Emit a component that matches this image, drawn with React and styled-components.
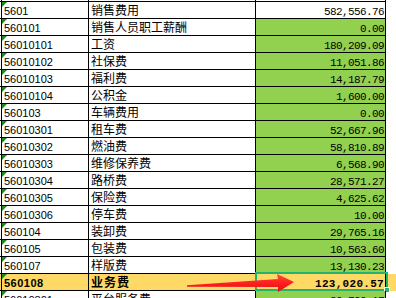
import styled, { createGlobalStyle } from 'styled-components'

const GlobalStyle = createGlobalStyle`
    html, body {
        margin: 0;
        padding: 0;
        background: #ffffff;
        overflow: hidden;
    }
`;

// 열 너비 (border 포함)
const COLS = '2px 87px 167px 130px 1fr';

const rows = [
    { code: '5601', name: '销售费用', amount: '582,556.76', plain: true },
    { code: '560101', name: '销售人员职工薪酬', amount: '0.00' },
    { code: '56010101', name: '工资', amount: '180,209.09' },
    { code: '56010102', name: '社保费', amount: '11,051.86' },
    { code: '56010103', name: '福利费', amount: '14,187.79' },
    { code: '56010104', name: '公积金', amount: '1,600.00' },
    { code: '560103', name: '车辆费用', amount: '0.00' },
    { code: '56010301', name: '租车费', amount: '52,667.96' },
    { code: '56010302', name: '燃油费', amount: '58,810.89' },
    { code: '56010303', name: '维修保养费', amount: '6,568.90' },
    { code: '56010304', name: '路桥费', amount: '28,571.27' },
    { code: '56010305', name: '保险费', amount: '4,625.62' },
    { code: '56010306', name: '停车费', amount: '10.00' },
    { code: '560104', name: '装卸费', amount: '29,765.16' },
    { code: '560105', name: '包装费', amount: '10,563.60' },
    { code: '560107', name: '样版费', amount: '13,130.23' },
    { code: '560108', name: '业务费', amount: '123,020.57', active: true },
    { code: '56010801', name: '平台服务费', amount: '20,799.17' },
];

const Sheet = styled.div`
    position: relative;
    margin-top: -15px;
    width: 396px;
`;

const Row = styled.div`
    display: grid;
    grid-template-columns: ${COLS};
    height: 17px;
    background-color: ${(props) => (props.$active ? '#ffd966' : '#ffffff')};
`;

const Cell = styled.div`
    position: relative;
    box-sizing: border-box;
    height: 17px;
    border-right: 1px solid #000;
    border-bottom: 1px solid #000;
    background-color: ${(props) => props.$bg || 'transparent'};
    white-space: nowrap;
`;

const Spare = styled.div`
    height: 17px;
`;

// 텍스트로 저장된 숫자 -> 왼쪽 위 초록 삼각형
const CodeCell = styled(Cell)`
    font-family: "Liberation Sans", Arial, sans-serif;
    font-size: 11px;
    line-height: 18px;
    padding-left: 2px;
    font-weight: ${(props) => (props.$bold ? 700 : 400)};
    letter-spacing: ${(props) => (props.$bold ? '0.5px' : '0')};
    color: #000;

    &::before {
        content: '';
        position: absolute;
        left: 0;
        top: 0;
        border-top: 5px solid #1c8a1c;
        border-right: 5px solid transparent;
    }
`;

const NameCell = styled(Cell)`
    font-family: "Noto Sans CJK SC", sans-serif;
    font-size: 12px;
    line-height: 16px;
    padding-left: 2px;
    font-weight: ${(props) => (props.$bold ? 700 : 400)};
    letter-spacing: ${(props) => (props.$bold ? '1px' : '0')};
    color: #000;
`;

const AmountCell = styled(Cell)`
    font-family: "Liberation Mono", "Courier New", monospace;
    font-size: 11px;
    line-height: 20px;
    text-align: right;
    padding-right: 1px;
    font-weight: ${(props) => (props.$bold ? 700 : 400)};
    letter-spacing: ${(props) => (props.$bold ? '0.3px' : '-0.6px')};
    color: #000;
`;

const Selection = styled.div`
    position: absolute;
    left: -1px;
    top: -2px;
    right: -3px;
    bottom: -1px;
    border: 2px solid #21b36f;
    pointer-events: none;
`;

const Handle = styled.div`
    position: absolute;
    right: -4px;
    bottom: -4px;
    width: 4px;
    height: 4px;
    background: #21b36f;
    border: 1px solid #ffffff;
`;

const Arrow = styled.svg`
    position: absolute;
    left: 180px;
    top: 285px;
    overflow: visible;
    pointer-events: none;
`;

function SheetRow({ row }) {
    const fill = row.active ? 'transparent' : row.plain ? '#ffffff' : '#92d050';
    return (
        <Row $active={row.active}>
            <Cell />
            <CodeCell $bold={row.active}>{row.code}</CodeCell>
            <NameCell $bold={row.active}>{row.name}</NameCell>
            <AmountCell $bold={row.active} $bg={fill}>
                {row.amount}
                {row.active && (
                    <Selection>
                        <Handle />
                    </Selection>
                )}
            </AmountCell>
            <Spare />
        </Row>
    );
}

export default function App() {
    return (
        <>
            <GlobalStyle />
            <Sheet>
                {/* 위쪽에 잘린 행 */}
                <Row>
                    <Cell />
                    <Cell />
                    <Cell />
                    <Cell />
                    <Spare />
                </Row>
                {rows.map((row) => (
                    <SheetRow key={row.code} row={row} />
                ))}
                <Arrow width="120" height="26" viewBox="0 0 120 26">
                    <defs>
                        <linearGradient id="arrowRed" x1="0" y1="0" x2="0" y2="1">
                            <stop offset="0" stopColor="#ff4a3a" />
                            <stop offset="0.5" stopColor="#ff1f1f" />
                            <stop offset="1" stopColor="#e01010" />
                        </linearGradient>
                    </defs>
                    <polygon
                        points="7,15.3 98,9 97,4 114,12 98,22 98,17 7,16.7"
                        fill="url(#arrowRed)"
                    />
                </Arrow>
            </Sheet>
        </>
    );
}
